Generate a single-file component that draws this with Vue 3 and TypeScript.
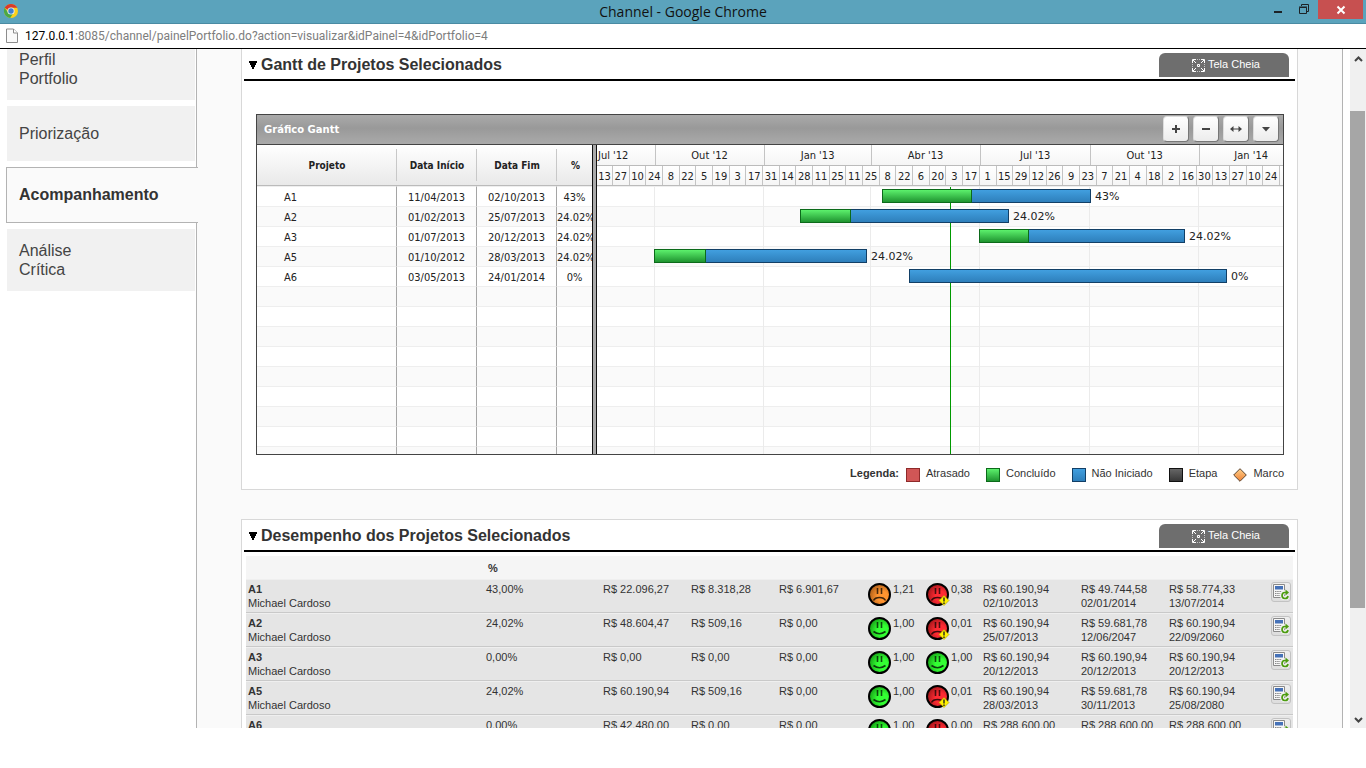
<script setup lang="ts">
interface Task {
  name: string
  start: string
  end: string
  done: string
  from: number
  to: number
  split: number
}

interface Project {
  name: string
  owner: string
  percent: string
  values: string[]
  costMood: Mood
  cost: string
  termMood: Mood
  term: string
  forecasts: [string, string][]
}

type Mood = 'good' | 'warn' | 'bad'

const SPAN = 686
const pct = (n: number): string => `${(n / SPAN) * 100}%`

const menu = [
  { lines: ['Perfil', 'Portfolio'], active: false },
  { lines: ['Priorização'], active: false },
  { lines: ['Acompanhamento'], active: true },
  { lines: ['Análise', 'Crítica'], active: false },
]

const tasks: Task[] = [
  { name: 'A1', start: '11/04/2013', end: '02/10/2013', done: '43%', from: 285, to: 494, split: 376 },
  { name: 'A2', start: '01/02/2013', end: '25/07/2013', done: '24.02%', from: 203, to: 412, split: 254 },
  { name: 'A3', start: '01/07/2013', end: '20/12/2013', done: '24.02%', from: 382, to: 588, split: 432 },
  { name: 'A5', start: '01/10/2012', end: '28/03/2013', done: '24.02%', from: 57, to: 270, split: 109 },
  { name: 'A6', start: '03/05/2013', end: '24/01/2014', done: '0%', from: 312, to: 630, split: 312 },
]
const emptyRows = 9

const months = [
  { label: "Jul '12", span: 58 },
  { label: "Out '12", span: 109 },
  { label: "Jan '13", span: 107 },
  { label: "Abr '13", span: 109 },
  { label: "Jul '13", span: 110 },
  { label: "Out '13", span: 109 },
  { label: "Jan '14", span: 84 },
]
const monthLines = [57, 166, 273, 382, 492, 601]
const today = 353

const days = [
  13, 27, 10, 24, 8, 22, 5, 19, 3, 17, 31, 14, 28, 11, 25, 11, 25, 8, 22, 6, 20, 3, 17, 1, 15, 29, 12, 26, 9,
  23, 7, 21, 4, 18, 2, 16, 30, 13, 27, 10, 24,
]

const legend = [
  { kind: 'late', label: 'Atrasado' },
  { kind: 'done', label: 'Concluído' },
  { kind: 'todo', label: 'Não Iniciado' },
  { kind: 'stage', label: 'Etapa' },
]

const owner = 'Michael Cardoso'
const projects: Project[] = [
  {
    name: 'A1', owner, percent: '43,00%', values: ['R$ 22.096,27', 'R$ 8.318,28', 'R$ 6.901,67'],
    costMood: 'warn', cost: '1,21', termMood: 'bad', term: '0,38',
    forecasts: [['R$ 60.190,94', '02/10/2013'], ['R$ 49.744,58', '02/01/2014'], ['R$ 58.774,33', '13/07/2014']],
  },
  {
    name: 'A2', owner, percent: '24,02%', values: ['R$ 48.604,47', 'R$ 509,16', 'R$ 0,00'],
    costMood: 'good', cost: '1,00', termMood: 'bad', term: '0,01',
    forecasts: [['R$ 60.190,94', '25/07/2013'], ['R$ 59.681,78', '12/06/2047'], ['R$ 60.190,94', '22/09/2060']],
  },
  {
    name: 'A3', owner, percent: '0,00%', values: ['R$ 0,00', 'R$ 0,00', 'R$ 0,00'],
    costMood: 'good', cost: '1,00', termMood: 'good', term: '1,00',
    forecasts: [['R$ 60.190,94', '20/12/2013'], ['R$ 60.190,94', '20/12/2013'], ['R$ 60.190,94', '20/12/2013']],
  },
  {
    name: 'A5', owner, percent: '24,02%', values: ['R$ 60.190,94', 'R$ 509,16', 'R$ 0,00'],
    costMood: 'good', cost: '1,00', termMood: 'bad', term: '0,01',
    forecasts: [['R$ 60.190,94', '28/03/2013'], ['R$ 59.681,78', '30/11/2013'], ['R$ 60.190,94', '25/08/2080']],
  },
  {
    name: 'A6', owner, percent: '0,00%', values: ['R$ 42.480,00', 'R$ 0,00', 'R$ 0,00'],
    costMood: 'good', cost: '1,00', termMood: 'bad', term: '0,00',
    forecasts: [['R$ 288.600,00', '24/01/2014'], ['R$ 288.600,00', '24/01/2014'], ['R$ 288.600,00', '24/01/2014']],
  },
]

const moods = (p: Project): { mood: Mood; value: string }[] => [
  { mood: p.costMood, value: p.cost },
  { mood: p.termMood, value: p.term },
]
</script>

<template>
  <div class="window">
    <svg class="defs" width="0" height="0" aria-hidden="true">
      <defs>
        <radialGradient id="face-good" cx="0.65" cy="0.6" r="0.7"><stop offset="0.35" stop-color="#33ff33" /><stop offset="1" stop-color="#149a14" /></radialGradient>
        <radialGradient id="face-warn" cx="0.65" cy="0.6" r="0.7"><stop offset="0.35" stop-color="#ff9430" /><stop offset="1" stop-color="#a85a16" /></radialGradient>
        <radialGradient id="face-bad" cx="0.65" cy="0.6" r="0.7"><stop offset="0.35" stop-color="#ff2b33" /><stop offset="1" stop-color="#9c1418" /></radialGradient>
        <linearGradient id="marco" x1="0" y1="0" x2="0" y2="1"><stop offset="0" stop-color="#ffd08a" /><stop offset="1" stop-color="#ef8236" /></linearGradient>
      </defs>
    </svg>

    <header class="titlebar">
      <svg class="chrome-logo" width="16" height="16" viewBox="0 0 16 16" aria-hidden="true">
        <circle cx="8" cy="8" r="7" fill="#fbd01b" />
        <path d="M1.6 4.8A7.2 7.2 0 0 1 14.4 4.8H8A3.2 3.2 0 0 0 5 7z" fill="#d93a2b" />
        <path d="M1.6 4.8A7.2 7.2 0 0 0 7.2 15L10 10.6 6 10.5z" fill="#4aa847" />
        <circle cx="8" cy="8" r="3.6" fill="#e8eef5" />
        <circle cx="8" cy="8" r="2.7" fill="#3f7fd0" />
      </svg>
      <h1 class="window-title">Channel - Google Chrome</h1>
      <div class="window-controls">
        <button type="button" class="control" aria-label="Minimizar">
          <svg width="10" height="12" viewBox="0 0 10 12"><path d="M1 8h8v2H1z" fill="#1c2226" /></svg>
        </button>
        <button type="button" class="control" aria-label="Restaurar">
          <svg width="12" height="12" viewBox="0 0 12 12" fill="none" stroke="#1c2226"><path d="M3.5 3V1.5h7v7H9" /><path d="M1.5 4.5h7v6h-7zM1 4h8" /></svg>
        </button>
        <button type="button" class="control close" aria-label="Fechar">
          <svg width="10" height="10" viewBox="0 0 10 10"><path d="M1.5 1.5l7 7m0-7l-7 7" stroke="#fff" stroke-width="2" /></svg>
        </button>
      </div>
    </header>

    <div class="address">
      <svg width="12" height="16" viewBox="0 0 12 16" aria-hidden="true">
        <path d="M.5 1h7l4 4v9.500H.5z" fill="#fafafa" stroke="#8c8c8c" /><path d="M7.500 1v4h4" fill="#fff" stroke="#8c8c8c" />
      </svg>
      <span class="url"><b>127.0.0.1</b>:8085/channel/painelPortfolio.do?action=visualizar&amp;idPainel=4&amp;idPortfolio=4</span>
    </div>

    <div class="viewport">
      <nav class="sidebar">
        <a v-for="item in menu" :key="item.lines[0]" href="#" class="menu-item" :class="{ active: item.active, single: item.lines.length === 1 }">
          <span v-for="line in item.lines" :key="line">{{ line }}</span>
        </a>
      </nav>

      <main class="content">
        <section class="panel first">
          <header class="panel-head">
            <svg class="arrow" width="8" height="8" viewBox="0 0 8 8" aria-hidden="true"><path d="M0 0h8v2H7v2H6v2H5v2H3V6H2V4H1V2H0z" /></svg>
            <h2>Gantt de Projetos Selecionados</h2>
            <button type="button" class="full">
              <svg width="13" height="13" viewBox="0 0 13 13" fill="none" stroke="#fff" aria-hidden="true"><path d="M.5 4V.5H4M9 .5h3.500V4M12.500 9v3.500H9M4 12.500H.5V9M1 1l3 3M12 1L9 4M12 12L9 9M1 12l3-3M5.500 5.500h2v2h-2z" /><path d="M5 .5h3M5 12.500h3M.5 5v3M12.500 5v3" stroke-dasharray="1 1" opacity="0.6" /></svg>
              <span>Tela Cheia</span>
            </button>
          </header>

          <div class="gantt">
            <div class="gantt-bar">
              <h3>Gráfico Gantt</h3>
              <button type="button" class="tool" aria-label="Ampliar"><svg width="12" height="12" viewBox="0 0 12 12"><path d="M6 2v8M2 6h8" stroke="#444" stroke-width="2" /></svg></button>
              <button type="button" class="tool" aria-label="Reduzir"><svg width="12" height="12" viewBox="0 0 12 12"><path d="M2 6h8" stroke="#444" stroke-width="2" /></svg></button>
              <button type="button" class="tool" aria-label="Ajustar"><svg width="12" height="12" viewBox="0 0 12 12"><path d="M2 6h8" stroke="#444" stroke-width="1" /><path d="M0 6l3.500-3v6zM12 6L8.500 3v6z" fill="#444" /></svg></button>
              <button type="button" class="tool" aria-label="Opções"><svg width="12" height="12" viewBox="0 0 12 12"><path d="M2 4h8L6 8.500z" fill="#444" /></svg></button>
            </div>
            <div class="gantt-body">
              <table class="tasks">
                <colgroup><col class="w-name" /><col class="w-date" /><col class="w-date" /><col class="w-pct" /></colgroup>
                <thead>
                  <tr><th>Projeto</th><th>Data Início</th><th>Data Fim</th><th>%</th></tr>
                </thead>
                <tbody>
                  <tr v-for="t in tasks" :key="t.name">
                    <td class="name">{{ t.name }}</td><td>{{ t.start }}</td><td>{{ t.end }}</td><td>{{ t.done }}</td>
                  </tr>
                  <tr v-for="n in emptyRows" :key="n"><td></td><td></td><td></td><td></td></tr>
                </tbody>
              </table>
              <div class="splitter"></div>
              <div class="timeline">
                <div class="months">
                  <div v-for="m in months" :key="m.label" class="month" :style="{ flexGrow: m.span }"><span>{{ m.label }}</span></div>
                </div>
                <div class="days">
                  <span v-for="(d, i) in days" :key="i">{{ d }}</span><span class="rest"></span>
                </div>
                <div class="chart">
                  <i v-for="x in monthLines" :key="x" class="grid-line" :style="{ left: pct(x) }"></i>
                  <i class="today" :style="{ left: pct(today) }"></i>
                  <div v-for="t in tasks" :key="t.name" class="lane">
                    <div class="task" :style="{ left: pct(t.from), width: pct(t.to - t.from) }">
                      <div v-if="t.split > t.from" class="progress" :style="{ width: `${((t.split - t.from) / (t.to - t.from)) * 100}%` }"></div>
                      <span class="task-label">{{ t.done }}</span>
                    </div>
                  </div>
                  <div v-for="n in emptyRows" :key="n" class="lane"></div>
                </div>
              </div>
            </div>
          </div>

          <div class="legend">
            <b>Legenda:</b>
            <span v-for="l in legend" :key="l.kind"><i class="swatch" :class="l.kind"></i>{{ l.label }}</span>
            <span><svg width="14" height="14" viewBox="0 0 14 14" aria-hidden="true"><path d="M7 .7L13.300 7 7 13.300.7 7z" fill="url(#marco)" stroke="#5a4430" /></svg>Marco</span>
          </div>
        </section>

        <section class="panel">
          <header class="panel-head">
            <svg class="arrow" width="8" height="8" viewBox="0 0 8 8" aria-hidden="true"><path d="M0 0h8v2H7v2H6v2H5v2H3V6H2V4H1V2H0z" /></svg>
            <h2>Desempenho dos Projetos Selecionados</h2>
            <button type="button" class="full">
              <svg width="13" height="13" viewBox="0 0 13 13" fill="none" stroke="#fff" aria-hidden="true"><path d="M.5 4V.5H4M9 .5h3.500V4M12.500 9v3.500H9M4 12.500H.5V9M1 1l3 3M12 1L9 4M12 12L9 9M1 12l3-3M5.500 5.500h2v2h-2z" /><path d="M5 .5h3M5 12.500h3M.5 5v3M12.500 5v3" stroke-dasharray="1 1" opacity="0.6" /></svg>
              <span>Tela Cheia</span>
            </button>
          </header>

          <table class="results">
            <colgroup>
              <col /><col class="c-percent" /><col class="c-value" /><col class="c-value" /><col class="c-value" />
              <col class="c-mood" /><col class="c-mood" /><col class="c-forecast" /><col class="c-value" /><col class="c-last" /><col class="c-action" />
            </colgroup>
            <thead>
              <tr><th></th><th>%</th><th v-for="n in 9" :key="n"></th></tr>
            </thead>
            <tbody>
              <tr v-for="p in projects" :key="p.name">
                <td><b>{{ p.name }}</b><br />{{ p.owner }}</td>
                <td>{{ p.percent }}</td>
                <td v-for="(v, i) in p.values" :key="i">{{ v }}</td>
                <td v-for="(m, i) in moods(p)" :key="i">
                  <div class="mood">
                    <svg width="24" height="24" viewBox="0 0 24 24" aria-hidden="true">
                      <circle cx="11.500" cy="11.500" r="10.500" :fill="`url(#face-${m.mood})`" stroke="#000" stroke-width="2" />
                      <path d="M9.500 5v6M13.500 5v6" stroke="#000" stroke-opacity="0.7" stroke-width="1.600" />
                      <path v-if="m.mood === 'good'" d="M5.500 14.500q6 4.500 12 0" fill="none" stroke="#000" stroke-opacity="0.75" stroke-width="1.600" />
                      <path v-else d="M5.500 17.500q1.500-3 6-3t6 3" fill="none" stroke="#000" stroke-opacity="0.75" stroke-width="1.600" />
                      <g v-if="m.mood === 'bad'">
                        <path d="M18 12.500l5 5-5 5-5-5z" fill="#fff200" stroke="#a89a00" stroke-width="0.600" />
                        <path d="M18 14.500v4M18 19.500v1.500" stroke="#222" stroke-width="1.400" />
                      </g>
                    </svg>
                    <span>{{ m.value }}</span>
                  </div>
                </td>
                <td v-for="(f, i) in p.forecasts" :key="i">{{ f[0] }}<br />{{ f[1] }}</td>
                <td>
                  <button type="button" class="recalc" aria-label="Recalcular">
                    <svg width="16" height="16" viewBox="0 0 16 16" aria-hidden="true">
                      <path d="M.5.5h11v13H.5z" fill="#f6f6f6" stroke="#8a8a8a" />
                      <path d="M2 2h8v3.500H2z" fill="#4672b8" />
                      <path d="M2 7.500h8M2 9.500h6M2 11.500h6" stroke="#888" stroke-dasharray="1.500 0.700" />
                      <path d="M13 8.200H11.500A3 3 0 1 0 15 11.500" fill="none" stroke="#f2f2f2" stroke-width="4" />
                      <path d="M13 8.500h-1.200A3 3 0 1 0 15 12" fill="none" stroke="#4c9c10" stroke-width="1.700" />
                      <path d="M12.500 5.500l3.500 3-3.500 3z" fill="#4c9c10" />
                    </svg>
                  </button>
                </td>
              </tr>
            </tbody>
          </table>
        </section>
      </main>

      <div class="scrollbar">
        <svg class="chevron" width="9" height="6" viewBox="0 0 9 6" aria-hidden="true"><path d="M1 5l3.500-3.500L8 5" fill="none" stroke="#444" stroke-width="2" /></svg>
        <div class="track"><div class="thumb"></div></div>
        <svg class="chevron" width="9" height="6" viewBox="0 0 9 6" aria-hidden="true"><path d="M1 1l3.500 3.500L8 1" fill="none" stroke="#444" stroke-width="2" /></svg>
      </div>
    </div>
  </div>
</template>

<style>
body { margin: 0; background: #fff; }
</style>

<style scoped>
* { box-sizing: border-box; }
.window {
  display: flex;
  flex-direction: column;
  height: 100vh;
  padding-bottom: 40px;
  overflow: hidden;
  font-family: "Liberation Sans", Arial, sans-serif;
  font-size: 11px;
  color: #333;
}
.defs { position: absolute; }
button { font: inherit; border: 0; padding: 0; margin: 0; cursor: pointer; }

.titlebar {
  display: grid;
  grid-template-columns: 1fr auto 1fr;
  flex: none;
  height: 24px;
  padding: 0 3px;
  background: #5ba3bc;
  border-bottom: 1px solid #4a8ba3;
}
.chrome-logo { margin-top: 3px; }
.window-title {
  margin: 0;
  font: 400 14px/23px "Open Sans", "Noto Sans", sans-serif;
  color: #111;
}
.window-controls { display: flex; justify-content: flex-end; align-items: flex-start; }
.control { display: flex; align-items: center; justify-content: center; width: 26px; height: 18px; background: none; }
.control.close { width: 45px; height: 19px; margin-left: 1px; background: #c75050; }

.address {
  display: flex;
  align-items: center;
  gap: 7px;
  flex: none;
  height: 25px;
  padding: 0 6px;
  border-bottom: 1px solid #000;
  background: #fff;
}
.url { font: 12px/20px Roboto, "Open Sans", sans-serif; color: #7d7d7d; white-space: nowrap; }
.url b { font-weight: 400; color: #000; }

.viewport { display: flex; flex: 1; min-height: 0; overflow: hidden; }

.sidebar {
  display: flex;
  flex-direction: column;
  gap: 6px;
  flex: none;
  width: 197px;
  padding: 0 1px 0 7px;
  border-right: 1px solid #b3b3b3;
}
.menu-item {
  display: flex;
  flex-direction: column;
  justify-content: center;
  flex: none;
  height: 62px;
  padding: 0 12px;
  background: #f1f1f1;
  color: #444;
  font-size: 16px;
  line-height: 19px;
  text-decoration: none;
}
.menu-item:first-child { margin-top: -11px; }
.menu-item.single { height: 55px; }
.menu-item.active {
  height: 56px;
  margin: 0 -3px 0 -1px;
  padding-bottom: 2px;
  background: #fafafa;
  border: 1px solid #b3b3b3;
  border-right: 0;
  color: #333;
  font-weight: 700;
  position: relative;
}

.content {
  flex: 1;
  min-width: 0;
  padding: 0 44px;
  background: #fafafa;
  border-right: 1px solid #b3b3b3;
}
.panel { margin-bottom: 29px; padding: 0 2px; background: #fff; border: 1px solid #d8d8d8; }
.panel.first { border-top: 0; }
.panel-head {
  display: flex;
  align-items: flex-start;
  height: 32px;
  padding: 4px 6px 0 5px;
  border-bottom: 2px solid #000;
}
.arrow { margin: 8px 4px 0 0; flex: none; }
h2 { flex: 1; margin: 0; font-size: 16px; line-height: 24px; color: #333; }
.full {
  display: flex;
  align-items: center;
  justify-content: center;
  gap: 3px;
  width: 130px;
  height: 24px;
  padding-left: 4px;
  background: #6e6e6e;
  border-radius: 6px 6px 0 0;
  color: #fff;
}
.full span { padding-bottom: 2px; }

.gantt {
  margin: 33px 11px 0 12px;
  border: 1px solid #444;
  font-family: "DejaVu Sans Condensed", "DejaVu Sans", Tahoma, sans-serif;
  color: #222;
}
.gantt-bar {
  display: flex;
  align-items: center;
  gap: 4px;
  height: 30px;
  padding: 0 4px 2px 7px;
  background: linear-gradient(#aaa, #999 45%, #aaa);
  border-bottom: 1px solid #444;
}
h3 { flex: 1; margin: 0; padding-top: 2px; font: 700 10px/28px "DejaVu Sans", Verdana, sans-serif; color: #fff; }
.tool {
  display: flex;
  align-items: center;
  justify-content: center;
  width: 26px;
  height: 26px;
  background: linear-gradient(#fff, #ececec);
  border: 1px solid #888;
  border-color: #ddd #777 #777 #ddd;
  border-radius: 4px;
}
.gantt-body { display: flex; height: 309px; overflow: hidden; }
.tasks { flex: none; width: 335px; table-layout: fixed; border-collapse: separate; border-spacing: 0; line-height: 14px; }
.w-name { width: 140px; }
.w-date { width: 80px; }
.w-pct { width: 35px; }
.tasks th {
  height: 41px;
  padding: 2px 0 0;
  background: linear-gradient(#c8c8c8, #c8c8c8) right 4px / 1px 32px no-repeat, linear-gradient(#fff, #e9e9e9);
  border-bottom: 1px solid #bbb;
  font-size: 10px;
}
.tasks th:last-child { background: linear-gradient(#fff, #e9e9e9); padding-left: 2px; }
.tasks td {
  height: 20px;
  padding: 2px 0 0;
  overflow: hidden;
  border-right: 1px solid #a5a5a5;
  border-bottom: 1px solid #eee;
  text-align: center;
  white-space: nowrap;
}
.tasks tbody tr:first-child td { height: 21px; border-top: 1px solid #eee; }
.tasks td:last-child { border-right: 0; }
.tasks td.name { padding-left: 27px; text-align: left; }
.tasks tbody tr:nth-child(even) { background: #fafafa; }
.splitter { flex: none; width: 5px; background: #aaa; border: solid #111; border-width: 0 1px; }

.timeline { flex: 1; min-width: 0; overflow: hidden; }
.months, .days { display: flex; text-align: center; background: linear-gradient(#fff, #f5f5f5); }
.months { height: 21px; line-height: 22px; border-bottom: 1px solid #bbb; }
.days { height: 20px; line-height: 22px; border-bottom: 1px solid #bbb; }
.month, .days span { flex: 1 1 0; min-width: 0; white-space: nowrap; border-right: 1px solid #c4c4c4; }
.month:first-child { text-align: left; }
.month:first-child span { padding-left: 1px; }
.month:last-child { text-align: right; border-right: 0; }
.month:last-child span { padding-right: 15px; }
.days span { flex-grow: 100; }
.days span:first-child { flex-grow: 96; }
.days .rest { flex-grow: 20; border: 0; }
.chart { position: relative; border-top: 1px solid #eee; }
.lane { position: relative; height: 20px; border-bottom: 1px solid #eee; }
.lane:nth-of-type(even) { background: #fafafa; }
.grid-line, .today { position: absolute; top: 0; bottom: 0; width: 1px; z-index: 1; }
.grid-line { background: #ebebeb; }
.today { background: #090; }
.task {
  position: absolute;
  z-index: 2;
  top: 2px;
  height: 14px;
  background: linear-gradient(#419fdf, #2e7fbb);
  border: 1px solid #123f66;
}
.progress {
  height: 14px;
  margin: -1px 0 0 -1px;
  background: linear-gradient(#5cf06c, #1f9430);
  border: 1px solid #0c6a1a;
}
.task-label {
  position: absolute;
  left: 100%;
  top: 0;
  margin-left: 5px;
  font-family: "DejaVu Sans", Verdana, sans-serif;
  font-size: 11px;
  line-height: 14px;
  white-space: nowrap;
}

.legend { display: flex; justify-content: flex-end; gap: 16px; height: 34px; padding: 11px 11px 0; line-height: 15px; }
.legend span { display: flex; gap: 6px; }
.legend b { margin-right: -9px; }
.legend svg, .swatch { margin-top: 2px; }
.swatch { width: 14px; height: 14px; border: 1px solid; }
.late { background: #d15656; border-color: #8e2a2a; }
.done { background: linear-gradient(#5cf06c, #1f9430); border-color: #0c6a1a; }
.todo { background: linear-gradient(#419fdf, #2e7fbb); border-color: #123f66; }
.stage { background: linear-gradient(#666, #383838); border-color: #111; }

.results { width: calc(100% - 4px); margin: 4px 2px 0; table-layout: fixed; border-collapse: separate; border-spacing: 0; line-height: 14px; }
.c-percent { width: 117px; }
.c-value { width: 88px; }
.c-mood { width: 58px; }
.c-forecast { width: 98px; }
.c-last { width: 102px; }
.c-action { width: 24px; }
.results th { height: 23px; padding: 0 4px; background: #f5f5f5; text-align: left; }
.results td {
  height: 34px;
  padding: 2px 0 2px 2px;
  vertical-align: top;
  background: #e5e5e5;
  border-top: 1px solid #efefef;
  border-bottom: 1px solid #c9c9c9;
  white-space: nowrap;
}
.mood { display: flex; gap: 1px; height: 28px; padding-left: 1px; }
.mood svg { margin-top: 1px; flex: none; }
.recalc {
  display: flex;
  align-items: center;
  justify-content: center;
  width: 20px;
  height: 20px;
  background: linear-gradient(#eee, #ddd);
  border: 1px solid #c2c2c2;
  border-radius: 3px;
}

.scrollbar {
  display: flex;
  flex-direction: column;
  align-items: center;
  flex: none;
  width: 16px;
  margin-left: 7px;
  padding: 7px 0 5px;
  background: #f0f0f0;
}
.track { flex: 1; width: 100%; padding: 49px 1px 0 0; }
.thumb { height: 82%; background: #a6a6a6; }
.chevron { flex: none; }
</style>
